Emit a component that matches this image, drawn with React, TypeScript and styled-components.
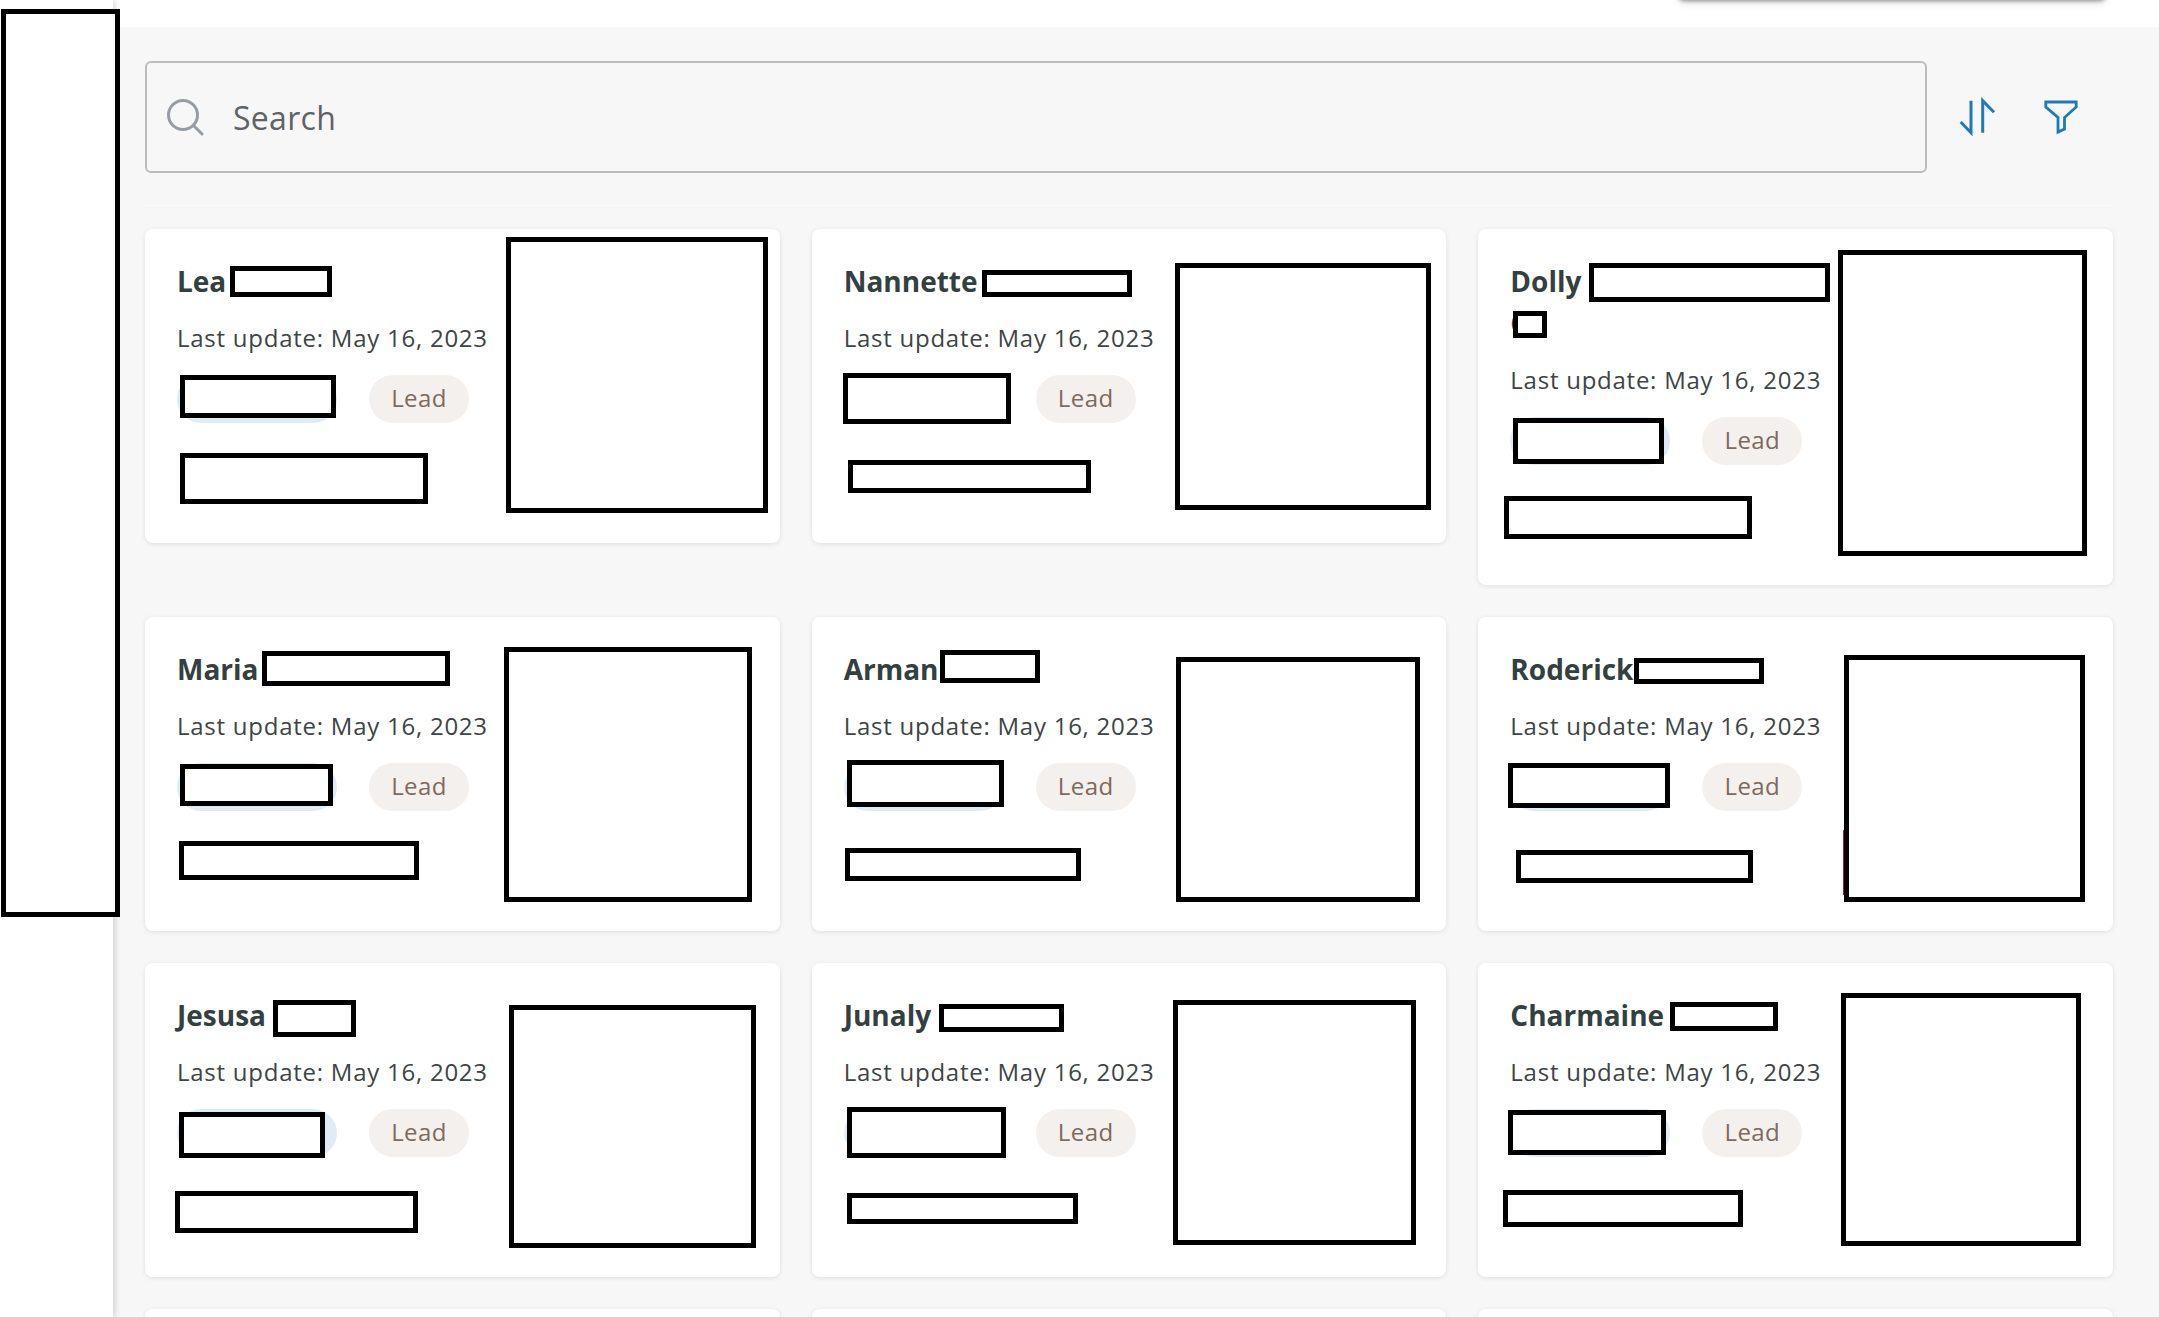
import React from "react";
import styled, { createGlobalStyle } from "styled-components";

const GlobalStyle = createGlobalStyle`
  html, body { margin: 0; padding: 0; height: 100%; background: #f7f7f7; }
  body { font-family: "Open Sans", "Noto Sans", sans-serif; }
  * { box-sizing: border-box; }
`;

const Page = styled.div`
  display: flex;
  width: 100%;
  height: 100vh;
  overflow: hidden;
  background: #f7f7f7;
`;

const Sidebar = styled.aside`
  position: relative;
  z-index: 2;
  flex: 0 0 113px;
  background: #fff;
  box-shadow: 2px 0 6px rgba(0, 0, 0, 0.16);
`;

const Main = styled.main`
  flex: 1;
  min-width: 0;
  display: flex;
  flex-direction: column;
`;

const TopBar = styled.header`
  position: relative;
  flex: 0 0 27px;
  background: #fff;
`;

const MenuEdge = styled.div`
  position: absolute;
  top: -20px;
  left: 1564px;
  width: 430px;
  height: 20px;
  border-radius: 0 0 8px 8px;
  background: #fff;
  box-shadow: 0 1px 4px rgba(0, 0, 0, 0.4), 0 3px 10px rgba(0, 0, 0, 0.1);
`;

const Content = styled.div`
  flex: 1;
  padding: 34px 46px 0 32px;
`;

const Toolbar = styled.div`
  display: flex;
  align-items: flex-start;
  height: 147px;
  padding-bottom: 34px;
  border-bottom: 1px solid #f3f3f3;
  margin-bottom: 21px;
`;

const SearchBox = styled.div`
  flex: 1;
  height: 112px;
  display: flex;
  align-items: center;
  gap: 28px;
  padding-left: 20px;
  border: 2px solid #bbbbbb;
  border-radius: 6px;
  background: #f7f7f7;
`;

const SearchText = styled.span`
  font-size: 32px;
  color: #5f6366;
  letter-spacing: 0.3px;
`;

const IconButton = styled.button<{ $before: number; $after: number }>`
  flex: none;
  display: flex;
  width: 40px;
  height: 40px;
  padding: 0;
  margin: 35px ${(p) => p.$after}px 0 ${(p) => p.$before}px;
  border: 0;
  background: none;
`;

const Grid = styled.div`
  display: grid;
  grid-template-columns: repeat(3, 1fr);
  gap: 32px;
  align-items: start;
`;

const Card = styled.article`
  position: relative;
  display: flex;
  min-height: 314px;
  padding: 32px 32px 45px;
  border-radius: 8px;
  background: #fff;
  box-shadow: 0 1px 5px rgba(0, 0, 0, 0.1);
`;

const Details = styled.div`
  display: flex;
  flex-direction: column;
  width: 320px;
`;

const Name = styled.h3`
  margin: -1px 0 20px;
  font-size: 28px;
  line-height: 42px;
  font-weight: 700;
  color: #343f3f;
`;

const Updated = styled.p`
  margin: 0 0 21px;
  font-size: 24px;
  line-height: 32px;
  letter-spacing: 0.75px;
  color: #3d4545;
  white-space: nowrap;
`;

const Pills = styled.div`
  display: flex;
  gap: 32px;
  margin-bottom: 35px;
`;

const Pill = styled.span<{ $tone: "blue" | "sand" }>`
  display: inline-flex;
  align-items: center;
  justify-content: center;
  height: 48px;
  width: ${(p) => (p.$tone === "blue" ? 160 : 100)}px;
  padding-bottom: 4px;
  border-radius: 24px;
  font-size: 24px;
  letter-spacing: 0.4px;
  color: #7d6a5c;
  background: ${(p) => (p.$tone === "blue" ? "#e0ecf5" : "#f4f0ed")};
`;

const LinkRow = styled.div`
  height: 40px;
`;

const Redaction = styled.div<{ $x: number; $y: number; $w: number; $h: number }>`
  position: absolute;
  left: ${(p) => p.$x}px;
  top: ${(p) => p.$y}px;
  width: ${(p) => p.$w}px;
  height: ${(p) => p.$h}px;
  border: 5px solid #000;
  background: #fff;
`;

const PhotoEdge = styled.div`
  position: absolute;
  left: 365px;
  top: 213px;
  width: 1px;
  height: 65px;
  background: #a8144e;
`;

type Box = [number, number, number, number];
type Person = { name: string; second?: string; photoEdge?: boolean; boxes: Box[] };

const people: Person[] = [
  { name: "Lea", boxes: [[85, 37, 102, 31], [361, 8, 262, 276], [35, 146, 156, 43], [35, 224, 248, 51]] },
  { name: "Nannette", boxes: [[170, 41, 150, 27], [363, 34, 256, 247], [31, 144, 168, 51], [36, 231, 243, 33]] },
  { name: "Dolly", second: "C", boxes: [[111, 34, 241, 39], [35, 82, 34, 27], [360, 21, 249, 306], [35, 189, 151, 46], [26, 267, 248, 43]] },
  { name: "Maria", boxes: [[117, 34, 188, 35], [359, 30, 248, 255], [35, 147, 153, 42], [34, 224, 240, 39]] },
  { name: "Arman", boxes: [[128, 33, 100, 33], [364, 40, 244, 245], [35, 143, 157, 47], [33, 231, 236, 33]] },
  { name: "Roderick", photoEdge: true, boxes: [[156, 41, 130, 26], [366, 38, 241, 247], [30, 146, 162, 45], [38, 233, 237, 33]] },
  { name: "Jesusa", boxes: [[128, 37, 83, 37], [364, 42, 247, 243], [34, 149, 146, 46], [30, 228, 243, 42]] },
  { name: "Junaly", boxes: [[127, 41, 125, 28], [361, 37, 243, 245], [35, 144, 159, 51], [35, 230, 231, 31]] },
  { name: "Charmaine", boxes: [[192, 39, 108, 29], [363, 30, 240, 253], [30, 147, 158, 45], [25, 227, 240, 37]] },
];

const SearchIcon = () => (
  <svg width="38" height="38" viewBox="0 0 38 38" fill="none" stroke="#959ca3" strokeWidth="3" strokeLinecap="round">
    <circle cx="16" cy="17" r="14.5" />
    <path d="M27 28l8 8" />
  </svg>
);

const SortIcon = () => (
  <svg width="40" height="40" viewBox="0 0 40 40" fill="none" stroke="#1f7ab5" strokeWidth="3">
    <path d="M13 4.7V36.7L2.7 26" />
    <path d="M24.7 36.7V4.7L36 16.3" />
  </svg>
);

const FilterIcon = () => (
  <svg width="40" height="40" viewBox="0 0 40 40" fill="none" stroke="#1f7ab5" strokeWidth="2.8">
    <path d="M4.8 6H35.2V11L23.5 21.5V33L17 36V21.5L4.8 11Z" />
  </svg>
);

export default function App() {
  return (
    <Page>
      <GlobalStyle />
      <Sidebar>
        <Redaction $x={1} $y={9} $w={119} $h={908} />
      </Sidebar>
      <Main>
        <TopBar>
          <MenuEdge />
        </TopBar>
        <Content>
          <Toolbar>
            <SearchBox>
              <SearchIcon />
              <SearchText>Search</SearchText>
            </SearchBox>
            <IconButton $before={31} $after={0} aria-label="Sort">
              <SortIcon />
            </IconButton>
            <IconButton $before={43} $after={32} aria-label="Filter">
              <FilterIcon />
            </IconButton>
          </Toolbar>
          <Grid>
            {people.map((p) => (
              <Card key={p.name}>
                <Details>
                  <Name>
                    {p.name}
                    {p.second && (
                      <>
                        <br />
                        {p.second}
                      </>
                    )}
                  </Name>
                  <Updated>Last update: May 16, 2023</Updated>
                  <Pills>
                    <Pill $tone="blue" />
                    <Pill $tone="sand">Lead</Pill>
                  </Pills>
                  <LinkRow />
                </Details>
                {p.photoEdge && <PhotoEdge />}
                {p.boxes.map(([x, y, w, h]) => (
                  <Redaction key={`${x}-${y}`} $x={x} $y={y} $w={w} $h={h} />
                ))}
              </Card>
            ))}
            <Card />
            <Card />
            <Card />
          </Grid>
        </Content>
      </Main>
    </Page>
  );
}
